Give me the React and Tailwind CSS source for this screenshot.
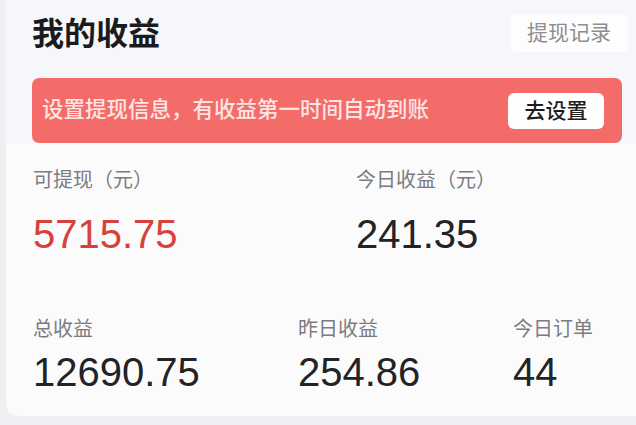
import React from 'react';

const font = { fontFamily: '"Liberation Sans", "Noto Sans CJK SC", sans-serif' };

const Stat = ({ label, value, red, gap, className }) => (
  <div className={className}>
    <div className="text-[20px] leading-[24px] text-[#7c7c80]">{label}</div>
    <div
      className={`${gap} text-[40px] leading-[44px] ${red ? 'text-[#d8403b]' : 'text-[#232325]'}`}
    >
      {value}
    </div>
  </div>
);

const App = () => {
  return (
    <div className="w-[636px] h-[425px] bg-[#eff0f4] pl-[6px] pb-[9px] overflow-hidden" style={font}>
      <div className="h-full bg-[#fbfbfc] rounded-bl-[12px] flex flex-col">
        {/* Header */}
        <div className="flex items-start justify-between pl-[26px] pr-[8px] pt-[14px] bg-[#f6f7fa]">
          <h1 className="mt-[1px] text-[32px] leading-[38px] font-bold text-[#1b1b1d]">我的收益</h1>
          <button className="w-[118px] h-[38px] rounded-[6px] bg-[#fdfdfe] text-[21px] text-[#8e8e92]">
            提现记录
          </button>
        </div>

        <div className="bg-[#f6f7fa] pt-[25px]">
          {/* Banner */}
          <div className="ml-[26px] mr-[14px] h-[65px] rounded-[7px] bg-[#f46c6a] flex items-center justify-between pl-[10px] pr-[18px]">
            <span className="text-[21.5px] font-medium text-[#fde5e4]">设置提现信息，有收益第一时间自动到账</span>
            <button className="w-[96px] h-[36px] rounded-[6px] bg-[#fefefe] text-[21px] font-medium text-[#1d1d1f]">
              去设置
            </button>
          </div>
        </div>

        {/* Stats */}
        <div className="flex pl-[27px] pt-[25px]">
          <Stat label="可提现（元）" value="5715.75" red gap="mt-[20px]" className="w-[323px]" />
          <Stat label="今日收益（元）" value="241.35" gap="mt-[20px]" />
        </div>
        <div className="flex pl-[27px] pt-[61px]">
          <Stat label="总收益" value="12690.75" gap="mt-[9px]" className="w-[265px]" />
          <Stat label="昨日收益" value="254.86" gap="mt-[9px]" className="w-[215px]" />
          <Stat label="今日订单" value="44" gap="mt-[9px]" />
        </div>
      </div>
    </div>
  );
};

export default App;
